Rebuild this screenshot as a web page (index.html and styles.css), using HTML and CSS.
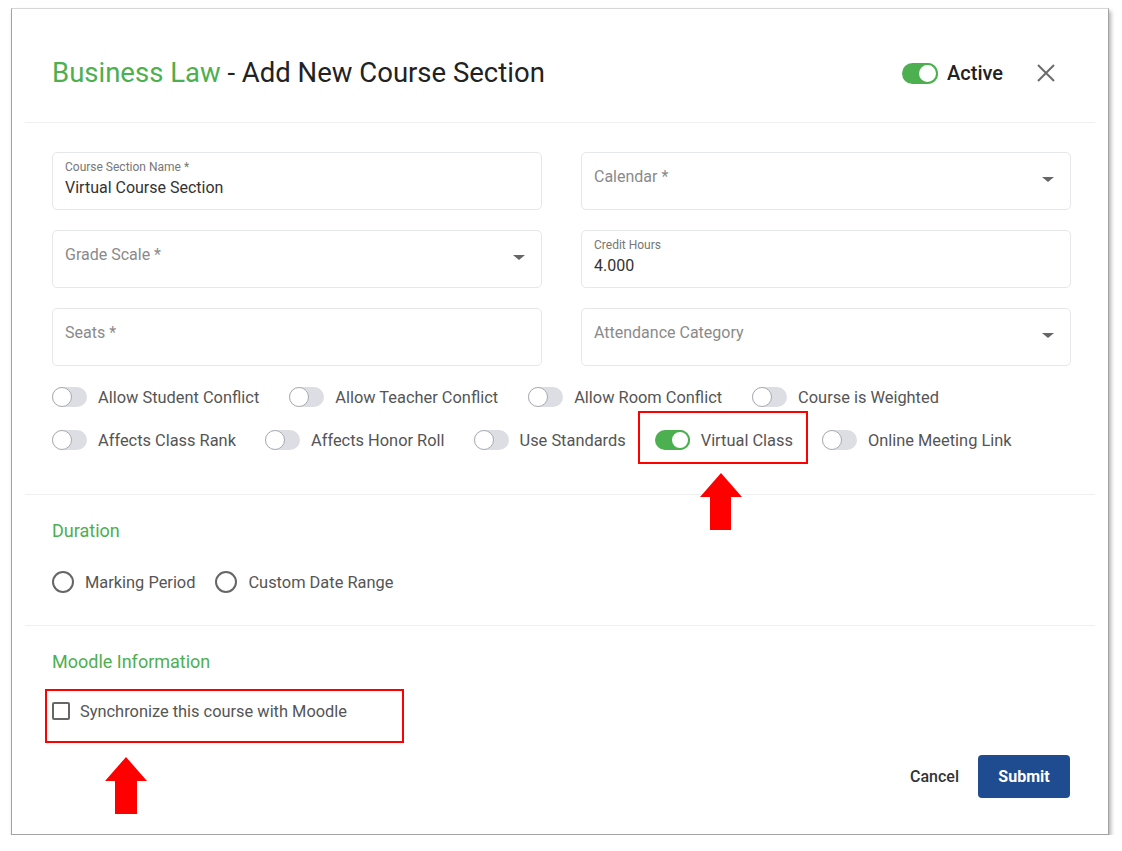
FILE: index.html
```html
<!DOCTYPE html>
<html lang="en">
<head>
    <title>Add New Course Section</title>
    <link rel="stylesheet" href="styles.css">
</head>
<body>
<div class="card">
    <div class="header">
        <h1 class="title"><span class="green">Business Law</span> - Add New Course Section</h1>
        <div class="active">
            <span class="toggle on"></span>
            <span class="active-text">Active</span>
        </div>
        <svg class="close" width="20" height="20" viewBox="0 0 20 20">
            <path d="M2 2 L18 18 M18 2 L2 18" stroke="#6b6b6b" stroke-width="2" fill="none"/>
        </svg>
    </div>
    <div class="divider"></div>

    <div class="section">
        <div class="fields">
            <div class="field">
                <div class="small-label">Course Section Name *</div>
                <div class="value">Virtual Course Section</div>
            </div>
            <div class="field select">
                <div class="placeholder">Calendar *</div>
                <span class="caret"></span>
            </div>
            <div class="field select">
                <div class="placeholder">Grade Scale *</div>
                <span class="caret"></span>
            </div>
            <div class="field">
                <div class="small-label">Credit Hours</div>
                <div class="value">4.000</div>
            </div>
            <div class="field">
                <div class="placeholder">Seats *</div>
            </div>
            <div class="field select">
                <div class="placeholder">Attendance Category</div>
                <span class="caret"></span>
            </div>
        </div>

        <div class="toggle-row first">
            <div class="toggle-item"><span class="toggle"></span><span class="toggle-label">Allow Student Conflict</span></div>
            <div class="toggle-item"><span class="toggle"></span><span class="toggle-label">Allow Teacher Conflict</span></div>
            <div class="toggle-item"><span class="toggle"></span><span class="toggle-label">Allow Room Conflict</span></div>
            <div class="toggle-item"><span class="toggle"></span><span class="toggle-label">Course is Weighted</span></div>
        </div>
        <div class="toggle-row last">
            <div class="toggle-item"><span class="toggle"></span><span class="toggle-label">Affects Class Rank</span></div>
            <div class="toggle-item"><span class="toggle"></span><span class="toggle-label">Affects Honor Roll</span></div>
            <div class="toggle-item"><span class="toggle"></span><span class="toggle-label">Use Standards</span></div>
            <div class="toggle-item marked">
                <span class="toggle on"></span><span class="toggle-label">Virtual Class</span>
                <svg class="arrow arrow-vc" width="42" height="57" viewBox="0 0 42 57">
                    <polygon points="21,0 42,24 31,24 31,57 10,57 10,24 0,24" fill="#ff0000"/>
                </svg>
            </div>
            <div class="toggle-item"><span class="toggle"></span><span class="toggle-label">Online Meeting Link</span></div>
        </div>
    </div>
    <div class="divider"></div>

    <div class="section">
        <h3 class="sub-title">Duration</h3>
        <div class="radio-row">
            <div class="radio-item"><span class="radio"></span><span class="radio-label">Marking Period</span></div>
            <div class="radio-item"><span class="radio"></span><span class="radio-label">Custom Date Range</span></div>
        </div>
    </div>
    <div class="divider"></div>

    <div class="section">
        <h3 class="sub-title">Moodle Information</h3>
        <div class="check-item marked-box">
            <span class="checkbox"></span><span class="check-label">Synchronize this course with Moodle</span>
            <svg class="arrow arrow-moodle" width="42" height="57" viewBox="0 0 42 57">
                <polygon points="21,0 42,24 32,24 32,57 10,57 10,24 0,24" fill="#ff0000"/>
            </svg>
        </div>
        <div class="footer">
            <button class="cancel">Cancel</button>
            <button class="submit">Submit</button>
        </div>
    </div>
</div>
</body>
</html>
```

FILE: styles.css
```css
body{
    margin: 0;
    padding: 8px 0 0 11px;
    background-color: #ffffff;
    font-family: Roboto, "Liberation Sans", sans-serif;
}

.card{
    width: 1098px;
    height: 827px;
    box-sizing: border-box;
    border: 1px solid #a3a3a3;
    border-top-color: #d6d6d6;
    box-shadow: 2px 3px 4px rgba(0, 0, 0, 0.3);
    background-color: #fff;
}

.header{
    display: flex;
    align-items: center;
    height: 113px;
    box-sizing: border-box;
    padding: 47px 52px 32px 40px;
}

.title{
    flex: 1;
    margin: 0;
    font-size: 27.5px;
    font-weight: 400;
    line-height: 34px;
    color: #222;
}

.green{
    color: #4caf50;
}

.active{
    display: flex;
    align-items: center;
}

.active .toggle{
    width: 36px;
    height: 21px;
}

.active-text{
    margin-left: 9px;
    font-size: 20px;
    font-weight: 500;
    color: #222;
}

.close{
    margin-left: 33px;
}

.divider{
    margin: 0 13px;
    border-top: 1px solid #f0f0f0;
}

.section{
    padding: 0 38px 0 40px;
}

.fields{
    display: grid;
    grid-template-columns: 490px 490px;
    column-gap: 39px;
    row-gap: 20px;
    margin-top: 29px;
}

.field{
    position: relative;
    height: 58px;
    box-sizing: border-box;
    border: 1px solid #e6e7ea;
    border-radius: 5px;
    padding: 7px 12px 0 12px;
}

.small-label{
    font-size: 12px;
    line-height: 14px;
    color: #777;
}

.value{
    margin-top: 3px;
    font-size: 16px;
    line-height: 22px;
    color: #333;
}

.placeholder{
    margin-top: 6px;
    font-size: 16px;
    line-height: 22px;
    color: #8a8a8a;
}

.caret{
    position: absolute;
    right: 16px;
    top: 24px;
    width: 0;
    height: 0;
    border-left: 6px solid transparent;
    border-right: 6px solid transparent;
    border-top: 5px solid #666;
}

.toggle-row{
    display: flex;
    gap: 30px;
    margin-top: 23px;
}

.toggle-row.first{
    margin-top: 21px;
}

.toggle-row.last{
    gap: 29px;
    margin-bottom: 44px;
}

.toggle-item{
    position: relative;
    display: flex;
    align-items: center;
    height: 20px;
}

.toggle{
    position: relative;
    display: inline-block;
    width: 35px;
    height: 20px;
    border-radius: 11px;
    background-color: #dcdee3;
    box-sizing: border-box;
}

.toggle::after{
    content: "";
    position: absolute;
    left: 0;
    top: 0;
    width: 18px;
    height: 18px;
    border-radius: 50%;
    background-color: #fff;
    border: 1px solid #a9abb0;
}

.toggle.on{
    background-color: #4caf50;
}

.toggle.on::after{
    left: auto;
    right: 0;
    width: 16px;
    height: 16px;
    border: 2px solid #4caf50;
}

.active .toggle.on::after{
    width: 17px;
    height: 17px;
}

.toggle-label{
    margin-left: 11px;
    font-size: 16.4px;
    color: #555;
    white-space: nowrap;
}

.marked::before{
    content: "";
    position: absolute;
    left: -17px;
    top: -19px;
    right: -15px;
    bottom: -14px;
    border: 2px solid #ff0000;
}

.arrow{
    position: absolute;
}

.arrow-vc{
    left: 45px;
    top: 43px;
}

.sub-title{
    margin: 24px 0 0 0;
    font-size: 18px;
    font-weight: 400;
    line-height: 24px;
    color: #4caf50;
}

.radio-row{
    display: flex;
    gap: 20px;
    margin-top: 28px;
    margin-bottom: 32px;
}

.radio-item{
    display: flex;
    align-items: center;
}

.radio{
    width: 22px;
    height: 22px;
    box-sizing: border-box;
    border: 2px solid #666;
    border-radius: 50%;
}

.radio-label{
    margin-left: 11px;
    font-size: 16.4px;
    color: #555;
}

.check-item{
    position: relative;
    display: flex;
    align-items: center;
    height: 18px;
    margin-top: 28px;
}

.checkbox{
    width: 18px;
    height: 18px;
    box-sizing: border-box;
    border: 2px solid #666;
    border-radius: 2px;
}

.check-label{
    margin-left: 10px;
    font-size: 16.4px;
    color: #555;
}

.marked-box::before{
    content: "";
    position: absolute;
    left: -7px;
    top: -13px;
    width: 359px;
    height: 54px;
    box-sizing: border-box;
    border: 2px solid #ff0000;
}

.arrow-moodle{
    left: 53px;
    top: 55px;
}

.footer{
    display: flex;
    justify-content: flex-end;
    align-items: center;
    gap: 10px;
    margin-top: 35px;
}

button{
    font-family: Roboto, "Liberation Sans", sans-serif;
    font-size: 16px;
    border: none;
    cursor: pointer;
}

.cancel{
    background: none;
    color: #333;
    font-weight: 500;
    padding: 0 9px;
}

.submit{
    width: 92px;
    height: 43px;
    border-radius: 4px;
    background-color: #1f4b91;
    color: #fff;
    font-weight: 700;
}
```
